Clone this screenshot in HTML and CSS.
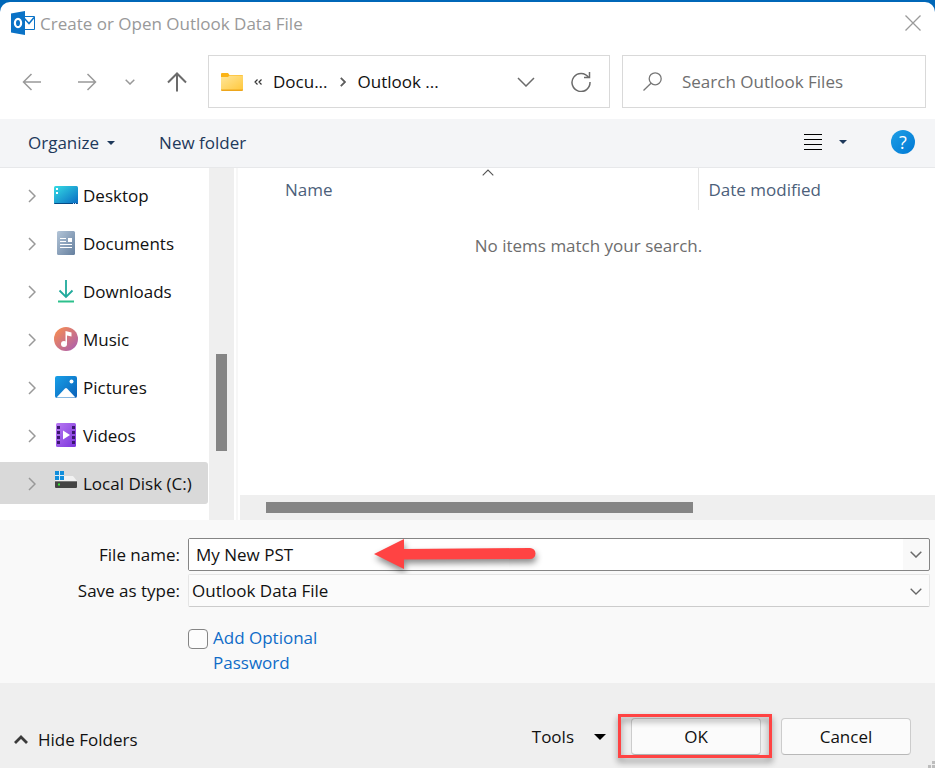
FILE: index.html
```html
<!DOCTYPE html>
<html lang="en">
<head>
<meta charset="utf-8">
<title>Create or Open Outlook Data File</title>
<link rel="stylesheet" href="styles.css">
</head>
<body>
<main class="dialog">
  <header class="titlebar">
    <svg class="app-icon" width="24" height="24" viewBox="0 0 24 24" aria-hidden="true">
      <path d="M12 5.500h11.500v13H12z" fill="#fff" stroke="#0a72c6"/>
      <path d="M13 7l5 5.500L23 6.500" fill="none" stroke="#0a72c6" stroke-width="1.500"/>
      <path d="M0 2.500L14 0v24L0 21.500z" fill="#0a72c6"/>
      <ellipse cx="7" cy="12" rx="3.100" ry="4.200" fill="none" stroke="#fff" stroke-width="2.200"/>
    </svg>
    <h1 class="title">Create or Open Outlook Data File</h1>
    <button class="icon-button close" aria-label="Close">
      <svg width="16" height="16" viewBox="0 0 16 16"><path d="M.5.5l15 15M15.500.5l-15 15" stroke="#9a9a9a" stroke-width="1.300"/></svg>
    </button>
  </header>

  <nav class="navbar">
    <div class="history">
      <button class="icon-button" aria-label="Back"><svg width="20" height="20" viewBox="0 0 20 20" class="line pale"><path d="M19 10H1.500M9.500 2L1.500 10l8 8"/></svg></button>
      <button class="icon-button" aria-label="Forward"><svg width="20" height="20" viewBox="0 0 20 20" class="line pale"><path d="M1 10h17.500M10.500 2l8 8-8 8"/></svg></button>
      <button class="icon-button" aria-label="Recent locations"><svg width="10" height="6" viewBox="0 0 10 6" class="line pale"><path d="M.7.7L5 5 9.300.7"/></svg></button>
      <button class="icon-button" aria-label="Up"><svg width="20" height="20" viewBox="0 0 20 20" class="line strong"><path d="M10 19.500V1.500M1 10.500l9-9 9 9"/></svg></button>
    </div>
    <div class="address">
      <svg width="22" height="18" viewBox="0 0 22 18" aria-hidden="true">
        <defs><linearGradient id="folder" x1="0" y1="0" x2="1" y2="1"><stop offset="0" stop-color="#ffe69a"/><stop offset="1" stop-color="#ffc83d"/></linearGradient></defs>
        <path d="M0 1q0-1 1-1h6l1.500 2H21q1 0 1 1v5H0z" fill="#fbb316"/>
        <path d="M0 4h7l1.500-1.500H22V17H0z" fill="url(#folder)"/>
        <path d="M0 16.500h22v.5q0 1-1 1H1q-1 0-1-1z" fill="#eda61c"/>
      </svg>
      <svg class="overflow" width="8" height="6" viewBox="0 0 8 6" aria-hidden="true"><path d="M3.500.5L1 3l2.500 2.500M7.500.5L5 3l2.500 2.500" fill="none" stroke="#333" stroke-width="1.200"/></svg>
      <a class="crumb" href="#">Docu...</a>
      <svg class="separator" width="6" height="10" viewBox="0 0 6 10" aria-hidden="true"><path d="M.8.8L5 5 .8 9.200" fill="none" stroke="#5c5c5c" stroke-width="1.800"/></svg>
      <a class="crumb" href="#">Outlook ...</a>
      <button class="icon-button history-toggle" aria-label="Previous locations"><svg width="18" height="10" viewBox="0 0 18 10" class="line mid"><path d="M1 1l8 8 8-8"/></svg></button>
      <button class="icon-button" aria-label="Refresh"><svg width="20" height="20" viewBox="0 0 20 20" class="line mid"><path d="M17.500 5.500A9 9 0 1 0 19 10M13 5.500h5.500V0"/></svg></button>
    </div>
    <label class="search">
      <svg width="19" height="19" viewBox="0 0 19 19" aria-hidden="true"><circle cx="12.200" cy="6.800" r="6" fill="none" stroke="#777" stroke-width="1.300"/><path d="M8 11.200L.5 18.500" stroke="#777" stroke-width="1.300"/></svg>
      <input type="text" placeholder="Search Outlook Files" aria-label="Search Outlook Files">
    </label>
  </nav>

  <div class="toolbar">
    <button class="command">Organize <span class="caret"></span></button>
    <button class="command">New folder</button>
    <button class="icon-button view" aria-label="View"><svg width="18" height="16" viewBox="0 0 18 16"><path d="M0 .5h18M0 5.500h18M0 10.500h18M0 15.500h18" stroke="#000"/></svg><span class="caret"></span></button>
    <button class="help" aria-label="Help">?</button>
  </div>

  <section class="browser">
    <ul class="tree">
      <li class="node"><button class="icon-button expand" aria-label="Expand Desktop"><svg width="8" height="14" viewBox="0 0 8 14" class="line pale"><path d="M1 1l6 6-6 6"/></svg></button>
        <a href="#"><svg width="24" height="24" viewBox="0 0 24 24"><defs><linearGradient id="desk" x1="0" y1="0" x2="1" y2="1"><stop offset="0" stop-color="#35dce4"/><stop offset="1" stop-color="#0869c2"/></linearGradient></defs><rect y="3" width="24" height="18" rx="1.500" fill="url(#desk)"/><path d="M0 20h24q0 1-1 1H1q-1 0-1-1z" fill="#064a85"/><path d="M2 5h2v2H2zM2 9h2v2H2z" fill="#fff"/><path d="M19 20h1v1h-1zM21 20h1v1h-1z" fill="#cdf"/></svg>Desktop</a></li>
      <li class="node"><button class="icon-button expand" aria-label="Expand Documents"><svg width="8" height="14" viewBox="0 0 8 14" class="line pale"><path d="M1 1l6 6-6 6"/></svg></button>
        <a href="#"><svg width="24" height="24" viewBox="0 0 24 24"><defs><linearGradient id="doc" x1="0" y1="0" x2="1" y2="1"><stop offset="0" stop-color="#b3c5d8"/><stop offset="1" stop-color="#657f9e"/></linearGradient></defs><rect x="3" width="18" height="24" rx="1.500" fill="url(#doc)"/><path d="M6 7.500h6M6 10.500h6M6 13.500h12M6 16.500h12" stroke="#fff" stroke-width="1.200"/><path d="M14 7h4v4h-4z" fill="#fff"/></svg>Documents</a></li>
      <li class="node"><button class="icon-button expand" aria-label="Expand Downloads"><svg width="8" height="14" viewBox="0 0 8 14" class="line pale"><path d="M1 1l6 6-6 6"/></svg></button>
        <a href="#"><svg width="24" height="24" viewBox="0 0 24 24"><path d="M12 1v17M5.500 11.500L12 18l6.500-6.500" fill="none" stroke="#20aa9c" stroke-width="1.800"/><path d="M4 22.500h16" stroke="#2cc08c" stroke-width="2"/></svg>Downloads</a></li>
      <li class="node"><button class="icon-button expand" aria-label="Expand Music"><svg width="8" height="14" viewBox="0 0 8 14" class="line pale"><path d="M1 1l6 6-6 6"/></svg></button>
        <a href="#"><svg width="24" height="24" viewBox="0 0 24 24"><defs><linearGradient id="music" x1="0" y1="0" x2="1" y2="1"><stop offset="0.100" stop-color="#f48b55"/><stop offset="1" stop-color="#a65bb5"/></linearGradient></defs><circle cx="12" cy="12" r="12" fill="url(#music)"/><path d="M11.500 4l6 1.500v4l-4.500-1V16h-1.500z" fill="#fff"/><circle cx="10" cy="17" r="3" fill="#fff"/></svg>Music</a></li>
      <li class="node"><button class="icon-button expand" aria-label="Expand Pictures"><svg width="8" height="14" viewBox="0 0 8 14" class="line pale"><path d="M1 1l6 6-6 6"/></svg></button>
        <a href="#"><svg width="24" height="24" viewBox="0 0 24 24"><defs><linearGradient id="pic" x1="0" y1="0" x2="1" y2="1"><stop offset="0" stop-color="#18a0e8"/><stop offset="1" stop-color="#0a60b8"/></linearGradient></defs><rect x="1" y="1" width="22" height="22" rx="2" fill="url(#pic)"/><path d="M2.500 22.500L11 13.500q1-1 2 0l8.500 9z" fill="#fff"/><circle cx="17.500" cy="6.500" r="2" fill="#fff"/></svg>Pictures</a></li>
      <li class="node"><button class="icon-button expand" aria-label="Expand Videos"><svg width="8" height="14" viewBox="0 0 8 14" class="line pale"><path d="M1 1l6 6-6 6"/></svg></button>
        <a href="#"><svg width="24" height="24" viewBox="0 0 24 24"><defs><linearGradient id="vid" x1="0" y1="0" x2="1" y2="1"><stop offset="0" stop-color="#b878f2"/><stop offset="1" stop-color="#7c35dc"/></linearGradient></defs><rect x="2" width="20" height="24" rx="1.500" fill="url(#vid)"/><path d="M4.500 3v19M19.500 3v19" stroke="#3b1770" stroke-width="3" stroke-dasharray="3 2"/><path d="M9 7.500v9l7-4.500z" fill="#fff"/></svg>Videos</a></li>
      <li class="node selected"><button class="icon-button expand" aria-label="Expand Local Disk (C:)"><svg width="8" height="14" viewBox="0 0 8 14" class="line pale"><path d="M1 1l6 6-6 6"/></svg></button>
        <a href="#"><svg width="24" height="24" viewBox="0 0 24 24"><path d="M5 5h14l4 5H1z" fill="#f1f1f1"/><rect x="1" y="10" width="22" height="7" rx="1" fill="#444"/><path d="M1 10.500h22" stroke="#777"/><rect x="4" y="12.500" width="2" height="2" fill="#35e835"/><path d="M1 0h9v9H1z" fill="#d9ebf7"/><path d="M1 0h4v4H1zM6 0h4v4H6zM1 5h4v4H1zM6 5h4v4H6z" fill="#118edb"/></svg>Local Disk (C:)</a></li>
    </ul>
    <div class="scroll-v"><div class="thumb"></div></div>
    <div class="files">
      <table class="list">
        <colgroup><col class="col-name"><col></colgroup>
        <thead><tr>
          <th><svg class="sort" width="12" height="7" viewBox="0 0 12 7" aria-hidden="true"><path d="M.7 6.300L6 1l5.300 5.300" fill="none" stroke="#555" stroke-width="1.100"/></svg>Name</th>
          <th>Date modified</th>
        </tr></thead>
        <tbody><tr><td colspan="2">No items match your search.</td></tr></tbody>
      </table>
      <div class="scroll-h"><div class="thumb"></div></div>
    </div>
  </section>

  <form class="fields">
    <label for="file-name">File name:</label>
    <div class="combo editable">
      <input id="file-name" type="text" value="My New PST">
      <button type="button" class="icon-button drop" aria-label="Show names"><svg width="12" height="7" viewBox="0 0 12 7" class="line mid"><path d="M.7.7L6 6 11.300.7"/></svg></button>
      <svg class="arrow" width="164" height="32" viewBox="0 0 164 32" aria-hidden="true"><path d="M0 15L30 0v10l126-1a5.500 5.500 0 0 1 0 11L30 20.500V30z" fill="#ff4343"/></svg>
    </div>
    <label for="file-type">Save as type:</label>
    <div class="combo">
      <select id="file-type"><option>Outlook Data File</option></select>
      <svg class="chevron" width="12" height="7" viewBox="0 0 12 7" aria-hidden="true"><path d="M.7.7L6 6 11.300.7" fill="none" stroke="#666" stroke-width="1.300"/></svg>
    </div>
    <div class="option">
      <input id="password" type="checkbox">
      <label for="password">Add Optional Password</label>
    </div>
  </form>

  <footer class="footer">
    <button class="hide"><svg width="14" height="9" viewBox="0 0 14 9" aria-hidden="true"><path d="M1 8l6-6 6 6" fill="none" stroke="#3b3b3b" stroke-width="2.800"/></svg>Hide Folders</button>
    <div class="actions">
      <button class="tools">Tools <span class="caret"></span></button>
      <div class="primary"><button class="push">OK</button><span class="highlight"></span></div>
      <button class="push">Cancel</button>
    </div>
    <svg class="grip" width="7" height="7" viewBox="0 0 7 7" aria-hidden="true"><path d="M4 0h3v3H4zM0 4h3v3H0zM4 4h3v3H4z" fill="#bdbdbd"/></svg>
  </footer>
</main>
</body>
</html>
```
FILE: styles.css
```css
* { box-sizing: border-box; }
body {
  margin: 0;
  background: #0067b8;
  color: #111;
  font: 17px/24px "Open Sans", "Noto Sans", sans-serif;
}
button, input, select { font: inherit; color: inherit; margin: 0; }
button { border: 0; padding: 0; background: none; }
a { color: inherit; text-decoration: none; }
svg { flex: none; display: block; }

.dialog {
  display: flex;
  flex-direction: column;
  min-height: calc(100vh - 2px);
  margin-top: 2px;
  border-radius: 10px 10px 0 0;
  background: #fff;
  overflow: hidden;
}
.icon-button { display: flex; align-items: center; justify-content: center; }
.line { fill: none; stroke-width: 1.5; }
.pale { stroke: #999; }
.mid { stroke: #6b6b6b; }
.strong { stroke: #6b6b6b; stroke-width: 2; }
.caret {
  border: solid transparent;
  border-width: 4px 4px 0;
  border-top-color: #1e395b;
}

.titlebar { display: flex; align-items: center; gap: 5px; height: 44px; padding: 0 14px 2px 11px; }
.title { flex: 1; margin: 0; padding-top: 1px; font-size: 17px; font-weight: 400; color: #999; }

.navbar {
  display: grid;
  grid-template-columns: 199px minmax(0, 402fr) 12px minmax(0, 304fr);
  height: 73px;
  padding: 9px 9px 11px 9px;
}
.history { display: grid; grid-template-columns: 46px 63px 24px 70px; align-items: center; margin-right: -4px; }
.address {
  display: flex;
  align-items: center;
  border: 1px solid #d9d9d9;
  padding: 0 18px 0 12px;
}
.overflow { margin: 0 11px; }
.separator { margin: 0 12px; }
.history-toggle { margin-left: auto; margin-right: 36px; }
.search {
  grid-column: 4;
  display: flex;
  align-items: center;
  gap: 20px;
  padding: 0 20px;
  border: 1px solid #d9d9d9;
}
.search input { flex: 1; min-width: 0; border: 0; padding: 0; outline: 0; background: none; }
.search input::placeholder { color: #6f6f6f; opacity: 1; }

.toolbar {
  display: flex;
  align-items: center;
  gap: 44px;
  height: 49px;
  padding: 0 20px 2px 28px;
  border-bottom: 1px solid #e7e8ea;
  background: #f4f5f7;
}
.command { display: flex; align-items: center; gap: 8px; padding-top: 2px; color: #1e395b; }
.view { gap: 17px; margin-left: auto; }
.help {
  width: 24px;
  height: 24px;
  border-radius: 50%;
  background: linear-gradient(135deg, #1f9fe6, #0078d4);
  color: #fff;
  font-size: 18px;
  line-height: 24px;
}

.browser { flex: 1; display: grid; grid-template-columns: 209px 25px 1fr; }
.tree {
  display: flex;
  flex-direction: column;
  gap: 6px;
  margin: 0;
  padding: 6px 1px 16px 0;
  list-style: none;
}
.node { display: flex; align-items: center; gap: 18px; height: 42px; padding: 2px 0 0 28px; border-radius: 0 3px 3px 0; }
.node a { display: flex; align-items: center; gap: 5px; white-space: nowrap; }
.node a svg { margin-bottom: 2px; }
.selected { background: #d9d9d9; }
.scroll-v { display: grid; grid-template-rows: 186fr 97fr 69fr; padding: 0 7px; background: #efefef; }
.scroll-v .thumb { grid-row: 2; background: #858585; }
.files {
  display: flex;
  flex-direction: column;
  min-width: 0;
  margin-left: 2px;
  border-left: 2px solid #f7f7f7;
}
.list { width: 100%; border-collapse: collapse; table-layout: fixed; }
.col-name { width: 66%; }
.list th {
  position: relative;
  height: 42px;
  padding: 2px 0 0 10px;
  font-weight: 400;
  text-align: left;
  color: #4c607a;
}
.list th:first-child { padding-left: 47px; border-right: 1px solid #e5e5e5; }
.list td { height: 70px; padding: 2px 0 0 4px; text-align: center; color: #6d6d6d; }
.sort { position: absolute; top: 1px; left: 244px; }
.scroll-h {
  display: grid;
  grid-template-columns: 26fr 427fr 242fr;
  height: 25px;
  margin: auto 0 0 2px;
  padding: 7px 0;
  background: #efefef;
}
.scroll-h .thumb { grid-column: 2; background: #858585; }

.fields {
  display: grid;
  grid-template-columns: 180px 1fr;
  gap: 3px 8px;
  padding: 18px 5px 8px 0;
  background: #f9f9f9;
}
.fields > label { text-align: right; line-height: 33px; }
.combo { position: relative; display: flex; height: 33px; border: 1px solid #e5e5e5; border-bottom-color: #ccc; border-radius: 2px; }
.editable { border-color: #858585; }
.combo input { flex: 1; min-width: 0; border: 0; padding: 0 7px; background: #fff; outline: 0; }
.combo select { flex: 1; min-width: 0; border: 0; padding: 0 3px; background: #fbfbfb; appearance: none; outline: 0; }
.drop { width: 26px; }
.chevron { position: absolute; top: 13px; right: 7px; }
.arrow { position: absolute; top: 0; left: 185px; overflow: visible; filter: drop-shadow(1px 4px 3px rgba(0, 0, 0, .45)); }
.option { grid-column: 2; display: flex; gap: 5px; padding-top: 15px; line-height: 25px; }
.option label { width: 120px; color: #0f6cc8; }
.option input {
  flex: none;
  width: 20px;
  height: 20px;
  margin-top: 4px;
  border: 1px solid #858585;
  border-radius: 4px;
  background: #fcfcfc;
  appearance: none;
}

.footer {
  position: relative;
  display: flex;
  align-items: center;
  justify-content: space-between;
  height: 85px;
  padding: 22px 24px 0 14px;
  background: #efefef;
}
.hide { display: flex; align-items: center; gap: 10px; padding-top: 6px; }
.actions { display: flex; align-items: center; gap: 20px; }
.tools { display: flex; align-items: center; gap: 20px; margin-right: 5px; }
.tools .caret { border-width: 6px 6px 0; border-top-color: #000; }
.push {
  width: 130px;
  height: 37px;
  border: 1px solid #ccc;
  border-bottom-color: #b8b8b8;
  border-radius: 4px;
  background: #fbfbfb;
}
.primary { position: relative; display: flex; }
.highlight {
  position: absolute;
  inset: -4px -11px -3px -13px;
  border: 3px solid #ff4343;
  filter: drop-shadow(0 4px 3px rgba(0, 0, 0, .45));
  pointer-events: none;
}
.grip { position: absolute; right: 0; bottom: 0; }
```
